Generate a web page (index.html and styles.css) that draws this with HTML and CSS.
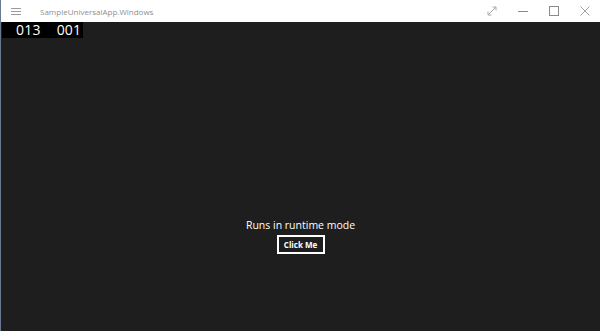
FILE: index.html
```html
<!DOCTYPE html>
<html>
<head>
<meta charset="utf-8">
<link rel="stylesheet" href="styles.css">
</head>
<body>
<div class="window">
  <div class="titlebar">
    <div class="hamburger">
      <svg width="10" height="7" viewBox="0 0 10 7"><rect x="0" y="0" width="10" height="1" fill="#9a9a9a"/><rect x="0" y="3" width="10" height="1" fill="#9a9a9a"/><rect x="0" y="6" width="10" height="1" fill="#9a9a9a"/></svg>
    </div>
    <div class="title">SampleUniversalApp.Windows</div>
    <div class="controls">
      <div class="ctl">
        <svg width="10" height="10" viewBox="0 0 10 10"><path d="M1 9 L9 1 M5.5 1 H9 V4.5 M1 5.5 V9 H4.5" stroke="#a8a8a8" stroke-width="1" fill="none"/></svg>
      </div>
      <div class="ctl">
        <svg width="10" height="10" viewBox="0 0 10 10"><path d="M0 5.5 H10" stroke="#8a8a8a" stroke-width="1"/></svg>
      </div>
      <div class="ctl">
        <svg width="10" height="10" viewBox="0 0 10 10"><rect x="0.5" y="0.5" width="9" height="9" stroke="#8a8a8a" stroke-width="1" fill="none"/></svg>
      </div>
      <div class="ctl">
        <svg width="10" height="10" viewBox="0 0 10 10"><path d="M0.5 0.5 L9.5 9.5 M9.5 0.5 L0.5 9.5" stroke="#8a8a8a" stroke-width="0.8" fill="none"/></svg>
      </div>
    </div>
  </div>
  <div class="content">
    <div class="counter"><span>013</span><span>001</span></div>
    <div class="center">
      <div class="label">Runs in runtime mode</div>
      <button class="btn">Click Me</button>
    </div>
  </div>
</div>
</body>
</html>
```
FILE: styles.css
```css
html, body {
  margin: 0;
  padding: 0;
  width: 600px;
  height: 331px;
  overflow: hidden;
  background: #1e1e1e;
}
.window {
  width: 600px;
  height: 331px;
  display: flex;
  flex-direction: column;
  border-left: 1px solid #6a7890;
  box-sizing: border-box;
  font-family: "Open Sans", "Noto Sans", sans-serif;
}
.titlebar {
  height: 22px;
  background: #ffffff;
  display: flex;
  align-items: center;
  flex-shrink: 0;
}
.hamburger {
  width: 18px;
  padding-left: 10px;
  display: flex;
  align-items: center;
  height: 22px;
}
.title {
  margin-left: 11px;
  font-size: 8px;
  color: #8f8f8f;
  flex: 1;
}
.controls {
  display: flex;
  height: 22px;
}
.ctl {
  width: 31px;
  display: flex;
  align-items: center;
  justify-content: center;
}
.content {
  flex: 1;
  background: #1e1e1e;
  position: relative;
  display: flex;
  flex-direction: column;
}
.counter {
  align-self: flex-start;
  margin-left: 1px;
  background: #000;
  color: #fff;
  font-size: 14px;
  line-height: 16px;
  height: 16px;
  padding: 0 2px 0 14px;
  display: flex;
  gap: 16px;
  letter-spacing: 0.2px;
}
.center {
  display: flex;
  flex-direction: column;
  align-items: center;
  margin-top: 179px;
}
.label {
  color: #fff;
  font-size: 10.5px;
  line-height: 16px;
}
.btn {
  margin-top: 2px;
  background: #1e1e1e;
  border: 2px solid #fff;
  color: #fff;
  font-family: "Open Sans", "Noto Sans", sans-serif;
  font-weight: 700;
  font-size: 8px;
  width: 48px;
  height: 19px;
  padding: 0;
}
```
